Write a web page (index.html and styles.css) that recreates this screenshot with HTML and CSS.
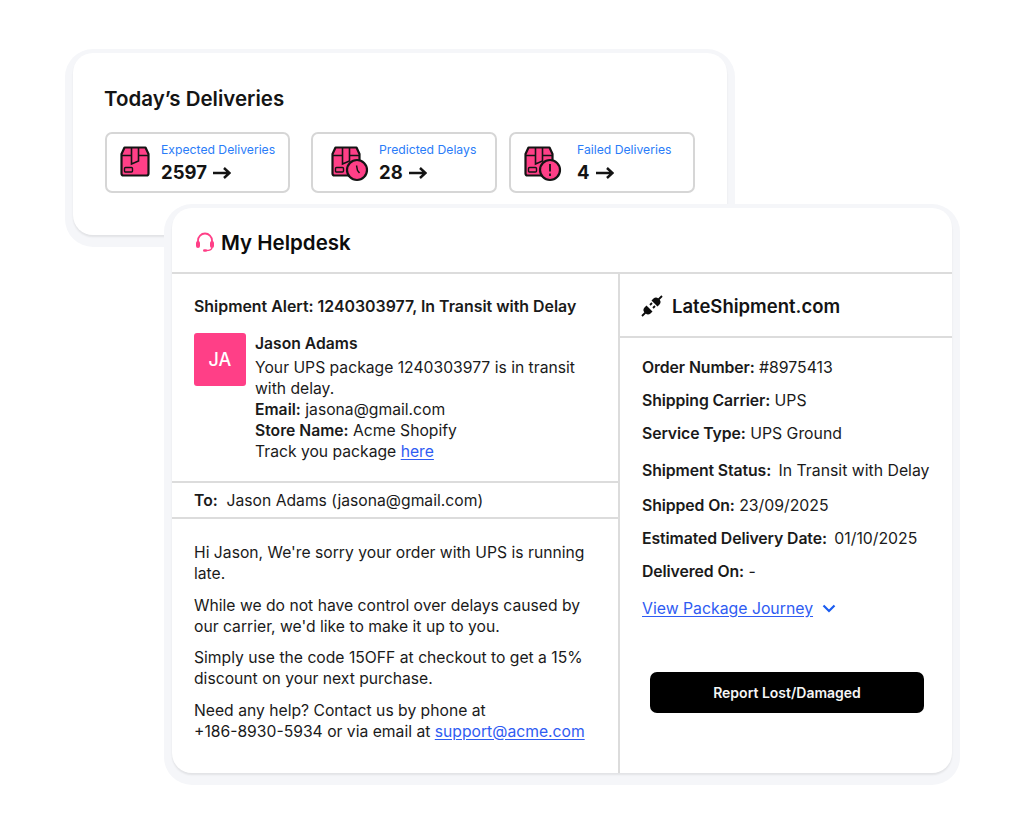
FILE: index.html
```html
<!DOCTYPE html>
<html lang="en">
<head>
    <meta charset="UTF-8">
    <meta name="viewport" content="width=device-width, initial-scale=1.0">
    <title>Today's Deliveries</title>
    <link rel="stylesheet" href="styles.css">
</head>
<body>
    <svg class="defs" width="0" height="0">
        <symbol id="box" viewBox="0 0 30 31">
            <path d="M4.5 1.5H25.5L28.5 8V27.5a2 2 0 0 1-2 2H3.5a2 2 0 0 1-2-2V8Z" fill="#ff3f87" stroke="#141414" stroke-width="2.2" stroke-linejoin="round"/>
            <path d="M1.5 9.5H11M18.5 9.5H28.5M11.5 1.5V18L18.5 15V1.5" fill="none" stroke="#141414" stroke-width="1.6"/>
            <rect x="4.5" y="21.5" width="8" height="4.5" rx="1" fill="none" stroke="#141414" stroke-width="1.4"/>
        </symbol>
        <symbol id="arrow" viewBox="0 0 18 12">
            <path d="M0 6H16M11 1L16.5 6L11 11" fill="none" stroke="#141414" stroke-width="2.5"/>
        </symbol>
    </svg>

    <section class="card deliveries">
        <h2>Today’s Deliveries</h2>
        <div class="stats">
            <div class="stat stat-first">
                <svg class="box-icon" width="30" height="31"><use href="#box"/></svg>
                <div class="stat-text">
                    <span class="stat-label">Expected Deliveries</span>
                    <span class="stat-value">2597 <svg width="18" height="12"><use href="#arrow"/></svg></span>
                </div>
            </div>
            <div class="stat stat-second">
                <svg class="box-icon" width="38" height="36" viewBox="0 0 38 36">
                    <use href="#box" width="30" height="31"/>
                    <circle cx="26" cy="24" r="10" fill="#ff3f87" stroke="#141414" stroke-width="2.2"/>
                    <path d="M25.5 19.5L26.5 24.5L28.5 27" fill="none" stroke="#141414" stroke-width="1.4"/>
                </svg>
                <div class="stat-text">
                    <span class="stat-label">Predicted Delays</span>
                    <span class="stat-value">28 <svg width="18" height="12"><use href="#arrow"/></svg></span>
                </div>
            </div>
            <div class="stat stat-third">
                <svg class="box-icon" width="38" height="36" viewBox="0 0 38 36">
                    <use href="#box" width="30" height="31"/>
                    <circle cx="26" cy="24" r="10" fill="#ff3f87" stroke="#141414" stroke-width="2.2"/>
                    <path d="M26 18V25.5M26 27.5V30" fill="none" stroke="#141414" stroke-width="1.8"/>
                </svg>
                <div class="stat-text">
                    <span class="stat-label">Failed Deliveries</span>
                    <span class="stat-value">4 <svg width="18" height="12"><use href="#arrow"/></svg></span>
                </div>
            </div>
        </div>
    </section>

    <section class="card helpdesk">
        <header class="helpdesk-head">
            <svg width="20" height="20" viewBox="0 0 20 20">
                <path d="M3 11V8.5a7 7 0 0 1 14 0V11" fill="none" stroke="#ff3f87" stroke-width="1.8"/>
                <rect x="1" y="9" width="4" height="7" rx="2" fill="#ff3f87"/>
                <rect x="15" y="9" width="4" height="7" rx="2" fill="#ff3f87"/>
                <path d="M17 15.5C17 18 14.5 18.5 11 18.5" fill="none" stroke="#ff3f87" stroke-width="1.4"/>
                <rect x="8" y="17.2" width="4" height="2.6" rx="1.3" fill="#ff3f87"/>
            </svg>
            <h2>My Helpdesk</h2>
        </header>
        <div class="columns">
            <div class="left">
                <div class="alert">
                    <h3>Shipment Alert: 1240303977, In Transit with Delay</h3>
                    <div class="message">
                        <div class="avatar">JA</div>
                        <div class="message-text">
                            <b class="sender">Jason Adams</b>
                            <p>
                                Your UPS package 1240303977 is in transit with delay.<br>
                                <b>Email:</b> jasona@gmail.com<br>
                                <b>Store Name:</b> Acme Shopify<br>
                                Track you package <a href="#">here</a>
                            </p>
                        </div>
                    </div>
                </div>
                <div class="to"><b>To:</b>&nbsp; Jason Adams (jasona@gmail.com)</div>
                <div class="mail">
                    <p>Hi Jason, We're sorry your order with UPS is running late.</p>
                    <p>While we do not have control over delays caused by our carrier, we'd like to make it up to you.</p>
                    <p>Simply use the code 15OFF at checkout to get a 15% discount on your next purchase.</p>
                    <p>Need any help? Contact us by phone at<br>+186-8930-5934 or via email at <a href="#">support@acme.com</a></p>
                </div>
            </div>
            <div class="right">
                <div class="brand">
                    <svg width="22" height="22" viewBox="0 0 22 22">
                        <path d="M10.5 5.5L12.5 3.5C14 2 16 2.2 17 3.2L18.8 5C19.8 6 20 8 18.5 9.5L16.5 11.5Z" fill="#0c0c0c"/>
                        <path d="M5.5 10.5L11.5 16.5L9.5 18.5C8 20 6 19.8 5 18.8L3.2 17C2.2 16 2 14 3.5 12.5Z" fill="#0c0c0c"/>
                        <path d="M17.5 4.5L21 1M1 21L4.5 17.5M9 10L11 8M12 13L14 11" stroke="#0c0c0c" stroke-width="1.8"/>
                    </svg>
                    <h2>LateShipment.com</h2>
                </div>
                <ul class="details">
                    <li class="row"><b>Order Number:</b> #8975413</li>
                    <li class="row"><b>Shipping Carrier:</b> UPS</li>
                    <li class="row"><b>Service Type:</b> UPS Ground</li>
                    <li class="row row-status row-wide"><b>Shipment Status:</b>&nbsp;In Transit with Delay</li>
                    <li class="row"><b>Shipped On:</b> 23/09/2025</li>
                    <li class="row row-wide"><b>Estimated Delivery Date:</b> 01/10/2025</li>
                    <li class="row"><b>Delivered On:</b> -</li>
                </ul>
                <div class="journey">
                    <a href="#">View Package Journey</a>
                    <svg width="14" height="9" viewBox="0 0 14 9"><path d="M1.5 1.5L7 7L12.5 1.5" fill="none" stroke="#1a5cf0" stroke-width="2.2"/></svg>
                </div>
                <button class="report">Report Lost/Damaged</button>
            </div>
        </div>
    </section>
</body>
</html>
```

FILE: styles.css
```css
* {
    box-sizing: border-box;
}
body {
    margin: 0;
    height: 827px;
    overflow: hidden;
    padding-top: 53px;
    background: #fff;
    font-family: Inter, "Liberation Sans", sans-serif;
    font-size: 15.8px;
    line-height: 21px;
    color: #1a1a1a;
}
h2, h3, p, ul {
    margin: 0;
    padding: 0;
}
b {
    font-weight: 600;
}
a {
    color: #2f5cf2;
    text-decoration: underline;
    text-underline-offset: 2px;
}
.defs {
    position: absolute;
}
.card {
    background: #fff;
    border-radius: 20px;
    box-shadow: 0 2px 2px rgba(0, 0, 0, 0.08), 0 4px 0 8px #f5f6f9;
}
.deliveries {
    width: 654px;
    height: 182px;
    margin-left: 73px;
    padding: 33px 32px 0;
}
.deliveries h2 {
    margin-left: -1px;
    font-size: 20.5px;
    line-height: 26px;
    font-weight: 600;
    color: #141414;
}
.stats {
    display: flex;
    margin-top: 20px;
}
.stat {
    display: flex;
    width: 186px;
    height: 61px;
    padding-left: 13px;
    border: 2px solid #d6d6d6;
    border-radius: 7px;
}
.stat-first {
    width: 185px;
    margin-right: 21px;
}
.stat-second {
    margin-right: 12px;
}
.box-icon {
    margin-top: 12px;
}
.stat-first .box-icon {
    margin-right: 11px;
}
.stat-second .box-icon {
    margin-left: 5px;
    margin-right: 10px;
}
.stat-third .box-icon {
    margin-right: 15px;
}
.stat-text {
    display: flex;
    flex-direction: column;
    padding-top: 8px;
}
.stat-label {
    font-size: 12.2px;
    line-height: 16px;
    color: #2a7cf8;
}
.stat-value {
    display: flex;
    align-items: center;
    gap: 6px;
    font-size: 18.5px;
    line-height: 25px;
    margin-top: 2px;
    font-weight: 700;
    color: #141414;
}
.helpdesk {
    position: relative;
    width: 780px;
    height: 565px;
    margin-left: 172px;
    margin-top: -27px;
}
.helpdesk-head {
    display: flex;
    align-items: center;
    gap: 6px;
    height: 66px;
    padding: 4px 0 0 23px;
    border-bottom: 2px solid #dcdcdc;
}
.helpdesk-head h2 {
    font-size: 20.5px;
    font-weight: 600;
    color: #0c0c0c;
}
.columns {
    display: flex;
    height: 499px;
}
.left {
    width: 448px;
    border-right: 2px solid #dcdcdc;
    font-size: 15.7px;
}
.alert {
    height: 209px;
    padding: 22px 21px 0 22px;
    border-bottom: 2px solid #dcdcdc;
}
.alert h3 {
    font-size: 15.9px;
    line-height: 21px;
    font-weight: 600;
}
.message {
    display: flex;
    gap: 9px;
    margin-top: 16px;
}
.avatar {
    flex: none;
    display: flex;
    align-items: center;
    justify-content: center;
    width: 52px;
    height: 53px;
    border-radius: 3px;
    background: #ff3f87;
    color: #fff;
    font-size: 18px;
    font-weight: 500;
}
.message-text {
    width: 335px;
}
.sender {
    display: block;
    margin-bottom: 3px;
}
.to {
    height: 36px;
    padding: 7px 22px 0;
    border-bottom: 2px solid #dcdcdc;
}
.mail {
    padding: 23px 22px 0;
}
.mail p {
    margin-bottom: 10.7px;
}
.right {
    flex: 1;
}
.brand {
    display: flex;
    align-items: center;
    gap: 9px;
    height: 64px;
    padding: 2px 0 0 21px;
    border-bottom: 2px solid #dcdcdc;
}
.brand h2 {
    font-size: 18.5px;
    font-weight: 600;
    color: #141414;
}
.details {
    list-style: none;
    padding: 19px 0 0 22px;
}
.row {
    margin-bottom: 12px;
}
.row b {
    letter-spacing: -0.1px;
}
.row-wide b {
    margin-right: 3px;
}
.row-status {
    margin-top: 16px;
    margin-bottom: 14px;
}
.journey {
    display: flex;
    align-items: center;
    gap: 9px;
    margin: 16px 0 0 22px;
}
.report {
    display: block;
    width: 274px;
    height: 41px;
    margin: 53px 0 0 30px;
    background: #000;
    color: #f5f5f5;
    border: none;
    border-radius: 7px;
    font-family: inherit;
    font-size: 14px;
    font-weight: 600;
}
```
